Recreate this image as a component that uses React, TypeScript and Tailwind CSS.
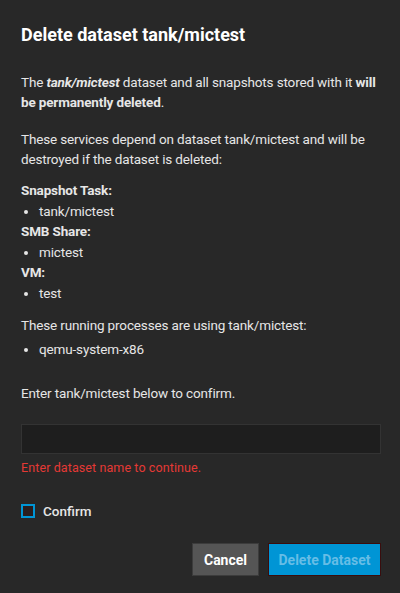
export default function App() {
  const deps = [
    { label: 'Snapshot Task:', items: ['tank/mictest'] },
    { label: 'SMB Share:', items: ['mictest'] },
    { label: 'VM:', items: ['test'] },
  ]

  return (
    <div className="w-[400px] h-[593px] bg-[#282828] text-[#e6e6e6] font-['Roboto',sans-serif] pl-[21px] pr-[19px] pt-[23px] text-[13.5px] tracking-[-0.15px] leading-[20px]">
      <h1 className="text-[18px] leading-[24px] font-bold text-white tracking-normal">Delete dataset tank/mictest</h1>

      <p className="mt-[25px]">
        The <b><i>tank/mictest</i></b> dataset and all snapshots stored with it{' '}
        <b>will be permanently deleted</b>.
      </p>

      <p className="mt-[17px]">
        These services depend on dataset tank/mictest and will be destroyed if the dataset is deleted:
      </p>

      <div className="mt-[11px]">
        {deps.map((d) => (
          <div key={d.label}>
            <div className="font-bold leading-[21px]">{d.label}</div>
            <ul className="list-disc pl-[18px] leading-[20px]">
              {d.items.map((it) => (
                <li key={it}>{it}</li>
              ))}
            </ul>
          </div>
        ))}
      </div>

      <p className="mt-[12px]">These running processes are using tank/mictest:</p>
      <ul className="list-disc pl-[18px] mt-[4px]">
        <li>qemu-system-x86</li>
      </ul>

      <p className="mt-[24px]">Enter tank/mictest below to confirm.</p>

      <input
        className="mt-[21px] block w-full h-[30px] bg-[#1e1e1e] border border-[#333333] outline-none px-2 text-white"
        aria-label="dataset name"
      />
      <div className="mt-[4px] text-[#e53935] text-[12.5px] tracking-[0.1px]">Enter dataset name to continue.</div>

      <label className="mt-[23px] flex items-center gap-[8px]">
        <span className="w-[14px] h-[14px] border-2 border-[#0095d5] bg-[#2a1e1e]" />
        <span className="font-medium tracking-normal">Confirm</span>
      </label>

      <div className="mt-[22px] flex justify-end gap-[9px]">
        <button className="h-[33px] w-[67px] bg-[#555555] text-white font-bold text-[14px] tracking-normal border border-[#3c3c3c]">
          Cancel
        </button>
        <button className="h-[33px] w-[113px] bg-[#0095d5] text-[#66bde6] font-bold text-[14px] tracking-normal border border-[#3a0d0d]">
          Delete Dataset
        </button>
      </div>
    </div>
  )
}
